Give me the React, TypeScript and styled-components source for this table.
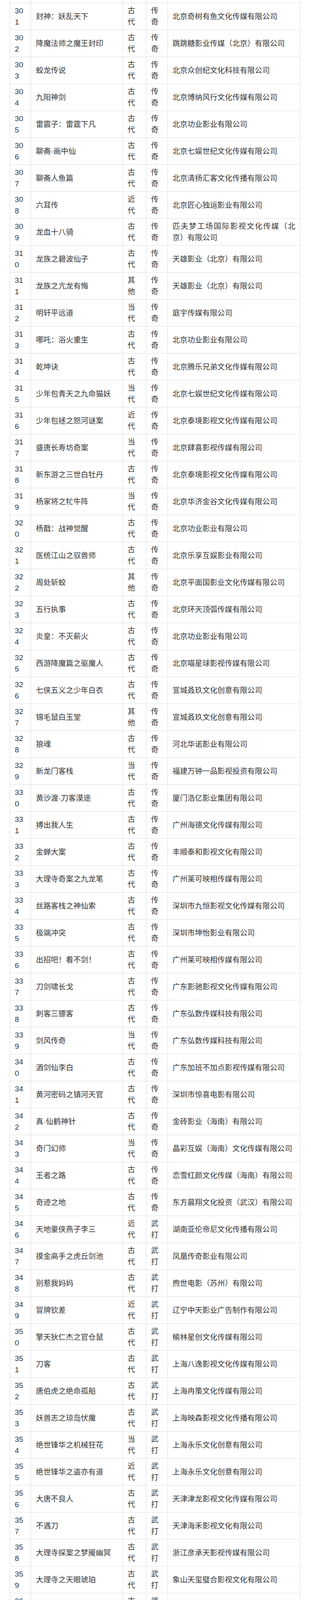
import styled, { createGlobalStyle } from 'styled-components'

const GlobalStyle = createGlobalStyle`
  html, body {
    margin: 0;
    padding: 0;
    background: #fff;
  }
  body {
    font-family: "Liberation Sans", "Noto Sans CJK SC", sans-serif;
    color: #333;
  }
`

// the shot is a slice of a longer list, so the frame clips it
const Page = styled.div`
  height: 6890px;
  overflow: hidden;
  padding: 0 28px 0 25px;
`

const Table = styled.table`
  width: 744px;
  table-layout: fixed;
  border-collapse: collapse;
  font-size: 19.2px;
  line-height: 29px;
`

const Cell = styled.td`
  border: 1px solid #ddd;
  padding: 5px 12px;
  vertical-align: middle;
  text-align: justify;
  word-break: break-all;
`

const CutCell = styled.td`
  height: 7px;
  padding: 0;
  border-left: 1px solid #ddd;
  border-right: 1px solid #ddd;
`

type Row = [string, string, string, string]

const rows: Row[] = [
  ['封神：妖乱天下', '古代', '传奇', '北京奇树有鱼文化传媒有限公司'],
  ['降魔法师之魔王封印', '古代', '传奇', '跳跳糖影业传媒（北京）有限公司'],
  ['蛟龙传说', '古代', '传奇', '北京众创纪文化科技有限公司'],
  ['九阳神剑', '古代', '传奇', '北京博纳风行文化传媒有限公司'],
  ['雷震子：雷霆下凡', '古代', '传奇', '北京功业影业有限公司'],
  ['聊斋·画中仙', '古代', '传奇', '北京七娱世纪文化传媒有限公司'],
  ['聊斋人鱼篇', '古代', '传奇', '北京清扬汇客文化传播有限公司'],
  ['六耳传', '近代', '传奇', '北京匠心独运影业有限公司'],
  ['龙血十八骑', '古代', '传奇', '匹夫梦工场国际影视文化传媒（北京）有限公司'],
  ['龙族之碧波仙子', '古代', '传奇', '天雄影业（北京）有限公司'],
  ['龙族之亢龙有悔', '其他', '传奇', '天雄影业（北京）有限公司'],
  ['明轩平远道', '当代', '传奇', '庭宇传媒有限公司'],
  ['哪吒：浴火重生', '古代', '传奇', '北京功业影业有限公司'],
  ['乾坤诀', '古代', '传奇', '北京腾乐兄弟文化传媒有限公司'],
  ['少年包青天之九命猫妖', '当代', '传奇', '北京七娱世纪文化传媒有限公司'],
  ['少年包拯之怒河谜案', '近代', '传奇', '北京泰境影视文化传媒有限公司'],
  ['盛唐长寿坊奇案', '当代', '传奇', '北京肆喜影视传媒有限公司'],
  ['新东游之三世白牡丹', '古代', '传奇', '北京泰境影视文化传媒有限公司'],
  ['杨家将之牤牛阵', '当代', '传奇', '北京华济金谷文化传媒有限公司'],
  ['杨戬：战神觉醒', '古代', '传奇', '北京功业影业有限公司'],
  ['医统江山之驭兽师', '古代', '传奇', '北京乐享互娱影业有限公司'],
  ['周处斩蛟', '其他', '传奇', '北京平面国影业文化传媒有限公司'],
  ['五行执事', '古代', '传奇', '北京环天顶弧传媒有限公司'],
  ['炎皇：不灭薪火', '古代', '传奇', '北京功业影业有限公司'],
  ['西游降魔篇之驱魔人', '古代', '传奇', '北京喵星球影视传媒有限公司'],
  ['七侠五义之少年白衣', '古代', '传奇', '宣城叒玖文化创意有限公司'],
  ['锦毛鼠白玉堂', '其他', '传奇', '宣城叒玖文化创意有限公司'],
  ['狼魂', '古代', '传奇', '河北华诺影业有限公司'],
  ['新龙门客栈', '当代', '传奇', '福建万钟一品影视投资有限公司'],
  ['黄沙渡·刀客漠途', '古代', '传奇', '厦门浩亿影业集团有限公司'],
  ['搏出我人生', '古代', '传奇', '广州海德文化传媒有限公司'],
  ['金蝉大案', '古代', '传奇', '丰顺泰和影视文化有限公司'],
  ['大理寺奇案之九龙笔', '古代', '传奇', '广州莱可映相传媒有限公司'],
  ['丝路客栈之神仙索', '古代', '传奇', '深圳市九恒影视文化传媒有限公司'],
  ['极端冲突', '古代', '传奇', '深圳市坤怡影业有限公司'],
  ['出招吧！看不剑！', '古代', '传奇', '广州莱可映相传媒有限公司'],
  ['刀剑啸长戈', '古代', '传奇', '广东影驰影视文化传媒有限公司'],
  ['刺客三镖客', '古代', '传奇', '广东弘数传媒科技有限公司'],
  ['剑风传奇', '当代', '传奇', '广东弘数传媒科技有限公司'],
  ['酒剑仙李白', '古代', '传奇', '广东加班不加点影视传媒有限公司'],
  ['黄河密码之镇河天官', '古代', '传奇', '深圳市惊喜电影有限公司'],
  ['真·仙鹤神针', '古代', '传奇', '金砖影业（海南）有限公司'],
  ['奇门幻师', '当代', '传奇', '晶彩互娱（海南）文化传媒有限公司'],
  ['王者之路', '古代', '传奇', '恋雪红颜文化传媒（海南）有限公司'],
  ['奇迹之地', '古代', '传奇', '东方晨翔文化投资（武汉）有限公司'],
  ['天地豪侠燕子李三', '近代', '武打', '湖南亚伦帝尼文化传播有限公司'],
  ['摸金高手之虎丘剑池', '古代', '武打', '凤凰传奇影业有限公司'],
  ['别惹我妈妈', '古代', '武打', '煦世电影（苏州）有限公司'],
  ['冒牌钦差', '近代', '武打', '辽宁中天影业广告制作有限公司'],
  ['擎天狄仁杰之官仓鼠', '古代', '武打', '榆林星创文化传媒有限公司'],
  ['刀客', '古代', '武打', '上海八逸影视文化传媒有限公司'],
  ['唐伯虎之绝命孤船', '古代', '武打', '上海冉策文化传媒有限公司'],
  ['妖兽志之琼岛伏魔', '古代', '武打', '上海映森影视文化传播有限公司'],
  ['绝世锋华之机械狂花', '当代', '武打', '上海永乐文化创意有限公司'],
  ['绝世锋华之盗亦有道', '近代', '武打', '上海永乐文化创意有限公司'],
  ['大唐不良人', '古代', '武打', '天津津龙影视文化传媒有限公司'],
  ['不遇刀', '古代', '武打', '天津海禾影视文化有限公司'],
  ['大理寺探案之梦魇幽冥', '古代', '武打', '浙江彦承天影视传媒有限公司'],
  ['大理寺之天眼琥珀', '古代', '武打', '象山天玺璧合影视文化有限公司'],
  ['太极之柔拳', '古代', '武打', '浙江创科文化传播有限公司'],
  ['铁血武道', '古代', '武打', '大头（象山）影视文化传媒有限公司'],
  ['新天局', '古代', '武打', '东阳丽娱文化传媒有限公司'],
  ['大宋侠之城隍案', '古代', '武打', '东阳横店影业有限公司'],
  ['龙虎山', '古代', '武打', '浙江影人文化传媒有限公司'],
  ['心灵八台拳', '近代', '武打', '浙江东阳影视文化有限公司'],
  ['九阳神掌', '古代', '武打', '东阳风行影视文化有限公司'],
  ['猎天神鹰', '古代', '武打', '杭州星河影视文化传媒有限公司'],
  ['不可功夫', '当代', '武打', '杭州天顺影业有限公司'],
  ['潜伏者', '近代', '武打', '浙江华策影视股份有限公司'],
  ['孝义侠', '古代', '武打', '宁波星光影视文化有限公司'],
  ['隐龙重现', '古代', '武打', '浙江横店影视文化有限公司'],
  ['六脉', '古代', '武打', '浙江金华影视传媒有限公司'],
  ['墨令', '古代', '武打', '浙江东阳影视文化有限公司'],
  ['神秧剑', '古代', '武打', '浙江横店影视文化有限公司'],
  ['新天龙八部之天龙英雄', '古代', '武打', '杭州影视文化传媒有限公司'],
  ['满江奇侠', '古代', '武打', '浙江影视文化传媒有限公司'],
  ['最后的刀客', '近代', '武打', '浙江东阳影视文化有限公司'],
  ['沙漠客栈', '古代', '武打', '浙江横店影视文化有限公司'],
  ['大漠侠踪', '古代', '武打', '温州影视文化传媒有限公司'],
  ['古墓奇探', '古代', '武打', '浙江影视文化传媒有限公司'],
  ['智能表妹', '当代', '武打', '杭州影视文化传媒有限公司'],
  ['百年变迁', '近代', '武打', '浙江影视文化传媒有限公司'],
  ['神龙门客栈', '古代', '武打', '浙江横店影视文化有限公司'],
  ['神丹妙手', '古代', '武打', '浙江东阳影视文化有限公司'],
  ['东海传说', '古代', '武打', '宁波影视文化传媒有限公司'],
  ['绝世情剑', '古代', '武打', '江苏影视文化传媒有限公司'],
  ['精卫填海', '古代', '武打', '苏州影视文化传媒有限公司'],
  ['八仙过海', '古代', '武打', '江苏影视文化传媒有限公司'],
  ['守护人', '当代', '武打', '常州影视文化传媒有限公司'],
  ['神偷', '古代', '武打', '苏州影视文化传媒有限公司'],
  ['神医', '古代', '武打', '江苏影视文化传媒有限公司'],
  ['女娲补天', '古代', '武打', '南京影视文化传媒有限公司'],
  ['侠客行', '古代', '武打', '江苏影视文化传媒有限公司'],
  ['江湖夜雨', '古代', '武打', '江苏影视文化传媒有限公司'],
  ['济公之佛光降魔', '古代', '武打', '江苏华娱兄弟文化有限公司'],
  ['敢死队之狸猫行动', '古代', '武打', '无锡华山论剑影视文化传媒有限公'],
  ['从你而来的明媚', '古代', '武打', '无锡市万有影丽文化传媒有限公司'],
  ['夺命埃博拉', '古代', '武打', '南京小天狼影视文化传媒有限公司'],
  ['斗破苍穹之莫欺少年穷', '近代', '武打', '圣世互娱影视科技江苏股份有限公司'],
]

const App = () => {
  return (
    <>
      <GlobalStyle />
      <Page>
        <Table>
          <colgroup>
            <col style={{ width: 54 }} />
            <col style={{ width: 235 }} />
            <col style={{ width: 60 }} />
            <col style={{ width: 55 }} />
            <col style={{ width: 340 }} />
          </colgroup>
          <tbody>
            <tr>
              <CutCell />
              <CutCell />
              <CutCell />
              <CutCell />
              <CutCell />
            </tr>
            {rows.map(([title, era, genre, company], i) => (
              <tr key={i}>
                <Cell>{301 + i}</Cell>
                <Cell>{title}</Cell>
                <Cell>{era}</Cell>
                <Cell>{genre}</Cell>
                <Cell>{company}</Cell>
              </tr>
            ))}
          </tbody>
        </Table>
      </Page>
    </>
  )
}

export default App
